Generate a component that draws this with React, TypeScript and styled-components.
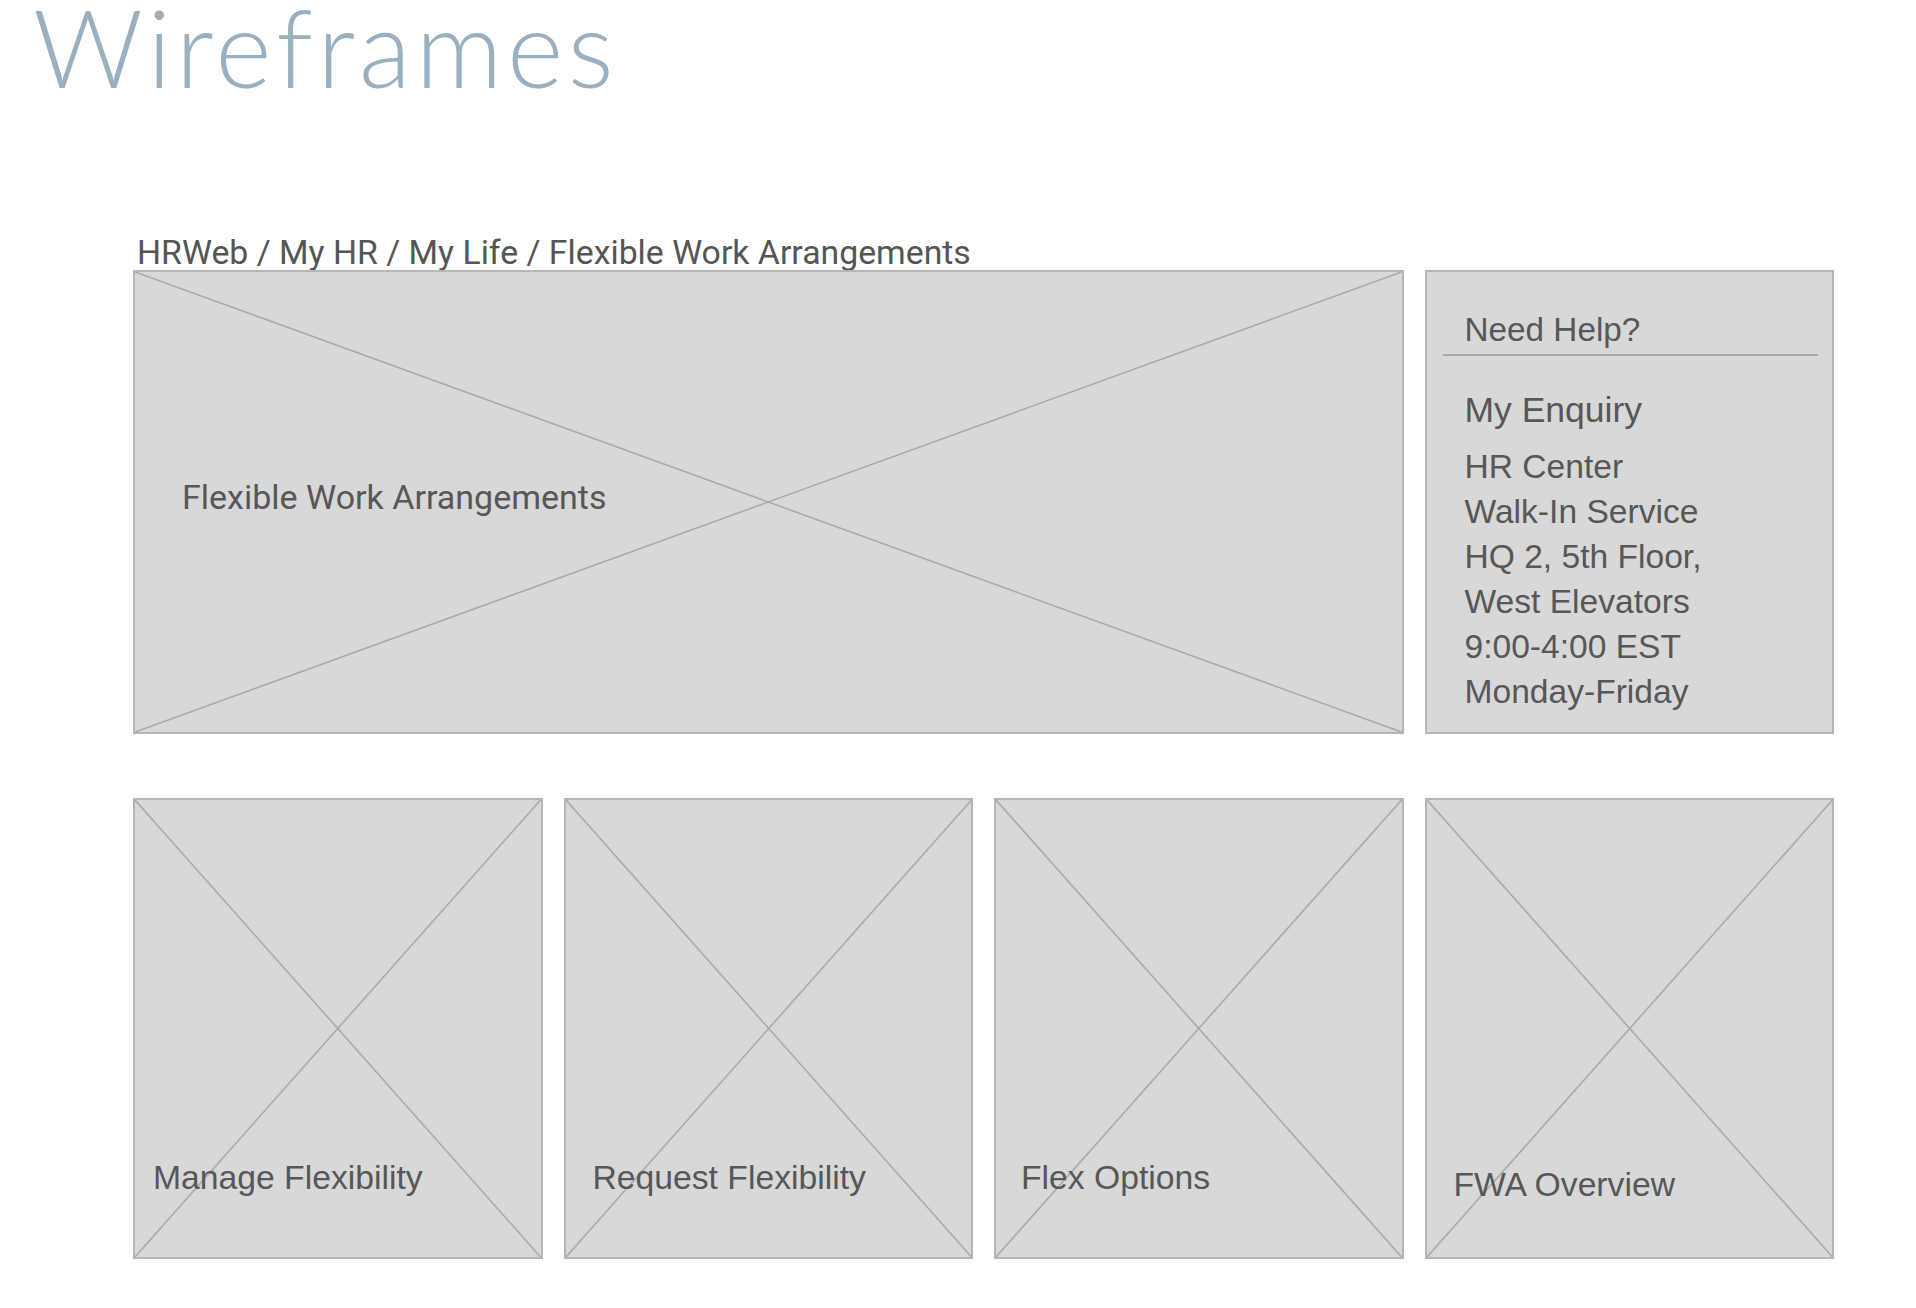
import React from "react";
import styled, { createGlobalStyle } from "styled-components";

const GlobalStyle = createGlobalStyle`
  html, body {
    margin: 0;
    padding: 0;
    background: #ffffff;
  }
  body {
    font-family: "Liberation Sans", Arial, sans-serif;
  }
`;

const Page = styled.div`
  width: 1916px;
  min-height: 1308px;
  display: flex;
  flex-direction: column;
`;

const Title = styled.h1`
  margin: 0;
  padding-left: 33px;
  height: 92px;
  font-family: Lato, "Open Sans", sans-serif;
  font-weight: 300;
  font-size: 108px;
  line-height: 92px;
  letter-spacing: 4.5px;
  color: #9aafbf;
  white-space: nowrap;
`;

const Board = styled.section`
  margin: 144px 0 0 133px;
  width: 1701px;
  display: flex;
  flex-direction: column;
`;

const Breadcrumb = styled.div`
  padding-left: 4px;
  font-family: Roboto, "Liberation Sans", sans-serif;
  font-size: 33.8px;
  line-height: 34px;
  color: #555555;
  white-space: nowrap;
`;

const Grid = styled.div`
  display: grid;
  grid-template-columns: repeat(4, 1fr);
  grid-template-rows: 464px 461px;
  column-gap: 21px;
  row-gap: 64px;
`;

const Placeholder = styled.div<{ $span?: number }>`
  position: relative;
  grid-column: span ${(p) => p.$span ?? 1};
  box-sizing: border-box;
  background: #d8d8d8;
  border: 2px solid #b6b6b6;
  overflow: hidden;
`;

const Cross = styled.svg`
  position: absolute;
  inset: 0;
  width: 100%;
  height: 100%;
  pointer-events: none;
`;

const HeroLabel = styled.div`
  position: relative;
  height: 100%;
  display: flex;
  align-items: center;
  padding: 0 0 10px 47px;
  box-sizing: border-box;
  font-family: Roboto, "Liberation Sans", sans-serif;
  font-size: 34px;
  line-height: 40px;
  color: #575757;
  white-space: nowrap;
`;

const TileLabel = styled.div<{ $left: number; $bottom: number }>`
  position: relative;
  height: 100%;
  box-sizing: border-box;
  display: flex;
  align-items: flex-end;
  padding: 0 0 ${(p) => p.$bottom}px ${(p) => p.$left}px;
  font-size: 33.7px;
  line-height: 40px;
  color: #575757;
  white-space: nowrap;
`;

const HelpPanel = styled.aside`
  box-sizing: border-box;
  background: #d8d8d8;
  border: 2px solid #b6b6b6;
  padding: 38px 14px 0 16px;
  display: flex;
  flex-direction: column;
  color: #575757;
`;

const HelpHeading = styled.div`
  padding-left: 22px;
  font-size: 33.3px;
  line-height: 40px;
`;

const HelpRule = styled.hr`
  margin: 4px 0 0 0;
  border: none;
  height: 2px;
  background: #aaaaaa;
`;

const HelpList = styled.div`
  padding-left: 22px;
  display: flex;
  flex-direction: column;
`;

const HelpTitle = styled.div`
  margin-top: 32px;
  margin-bottom: 11px;
  font-size: 35.5px;
  line-height: 45px;
`;

const HelpLine = styled.div`
  font-size: 33.6px;
  line-height: 45px;
  white-space: nowrap;
`;

const XMark = () => (
  <Cross preserveAspectRatio="none" viewBox="0 0 100 100">
    <line x1="0" y1="0" x2="100" y2="100" stroke="#a9a9a9" strokeWidth="1.6" vectorEffect="non-scaling-stroke" />
    <line x1="100" y1="0" x2="0" y2="100" stroke="#a9a9a9" strokeWidth="1.6" vectorEffect="non-scaling-stroke" />
  </Cross>
);

const tiles = [
  { label: "Manage Flexibility", left: 18, bottom: 60 },
  { label: "Request Flexibility", left: 27, bottom: 60 },
  { label: "Flex Options", left: 25, bottom: 60 },
  { label: "FWA Overview", left: 27, bottom: 53 },
];

const helpLines = [
  "HR Center",
  "Walk-In Service",
  "HQ 2, 5th Floor,",
  "West Elevators",
  "9:00-4:00 EST",
  "Monday-Friday",
];

export default function App() {
  return (
    <>
      <GlobalStyle />
      <Page>
        <Title>Wireframes</Title>
        <Board>
          <Breadcrumb>HRWeb / My HR / My Life / Flexible Work Arrangements</Breadcrumb>
          <Grid>
            <Placeholder $span={3}>
              <XMark />
              <HeroLabel>Flexible Work Arrangements</HeroLabel>
            </Placeholder>
            <HelpPanel>
              <HelpHeading>Need Help?</HelpHeading>
              <HelpRule />
              <HelpList>
                <HelpTitle>My Enquiry</HelpTitle>
                {helpLines.map((l) => (
                  <HelpLine key={l}>{l}</HelpLine>
                ))}
              </HelpList>
            </HelpPanel>
            {tiles.map((t) => (
              <Placeholder key={t.label}>
                <XMark />
                <TileLabel $left={t.left} $bottom={t.bottom}>
                  {t.label}
                </TileLabel>
              </Placeholder>
            ))}
          </Grid>
        </Board>
      </Page>
    </>
  );
}
